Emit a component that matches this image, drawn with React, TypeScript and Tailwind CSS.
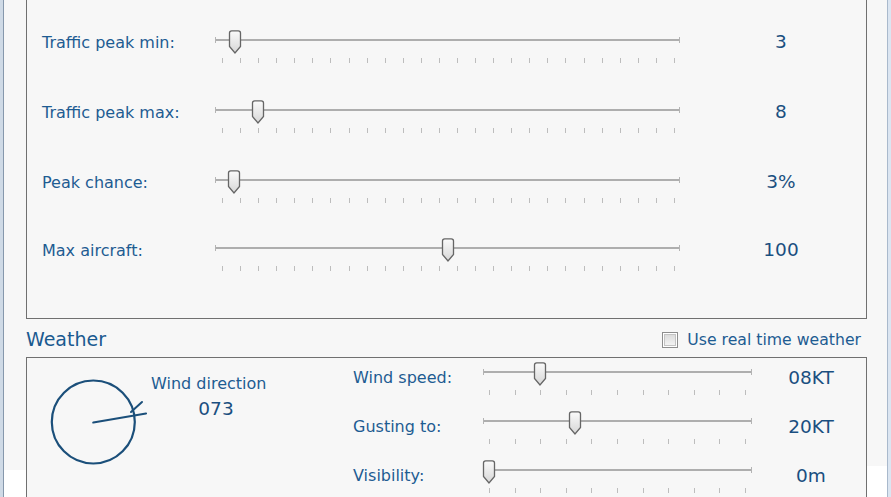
import React from "react";

const font = { fontFamily: '"DejaVu Sans", "Liberation Sans", sans-serif' };

function Thumb() {
  return (
    <svg width="14" height="24" viewBox="0 0 14 24" className="block">
      <defs>
        <linearGradient id="tg" x1="0" y1="0" x2="0" y2="1">
          <stop offset="0" stopColor="#fbfbfb" />
          <stop offset="1" stopColor="#d6d6d6" />
        </linearGradient>
      </defs>
      <path
        d="M1.5 3 Q1.5 0.8 3.7 0.8 H10.3 Q12.5 0.8 12.5 3 V16.5 L7 23 L1.5 16.5 Z"
        fill="url(#tg)"
        stroke="#666666"
        strokeWidth="1.3"
      />
    </svg>
  );
}

function Slider({
  width,
  thumb,
  ticks,
  padL,
  padR,
}: {
  width: number;
  thumb: number;
  ticks: number;
  padL: number;
  padR: number;
}) {
  return (
    <div className="relative h-[36px] shrink-0" style={{ width }}>
      <div className="absolute left-0 right-0 top-[10px] h-[2px] bg-[#aeaeae]" />
      <div className="absolute left-0 top-[8px] h-[6px] w-px bg-[#b4b4b4]" />
      <div className="absolute right-0 top-[8px] h-[6px] w-px bg-[#b4b4b4]" />
      <div
        className="absolute top-[29px] flex justify-between"
        style={{ left: padL, right: padR }}
      >
        {Array.from({ length: ticks }).map((_, i) => (
          <div key={i} className="h-[5px] w-px bg-[#bdbdbd]" />
        ))}
      </div>
      <div className="absolute top-[1px]" style={{ left: thumb - 7 }}>
        <Thumb />
      </div>
    </div>
  );
}

const topRows = [
  { label: "Traffic peak min:", value: "3", thumb: 20, h: 70 },
  { label: "Traffic peak max:", value: "8", thumb: 43, h: 70 },
  { label: "Peak chance:", value: "3%", thumb: 19, h: 68 },
  { label: "Max aircraft:", value: "100", thumb: 233, h: 70 },
];

const weatherRows = [
  { label: "Wind speed:", value: "08KT", thumb: 57 },
  { label: "Gusting to:", value: "20KT", thumb: 92 },
  { label: "Visibility:", value: "0m", thumb: 6 },
];

export default function App() {
  return (
    <div
      className="flex h-[497px] w-[891px] overflow-hidden bg-[#f7f7f7] text-[#1e5c92]"
      style={font}
    >
      {/* left window frame */}
      <div className="flex w-[4px] shrink-0">
        <div className="w-[3px] bg-[#cfdae6]" />
        <div className="w-px bg-[#8698ac]" />
      </div>
      <div className="flex w-[22px] shrink-0 flex-col">
        <div className="flex-1" />
        <div className="h-[27px] bg-white" />
      </div>

      {/* main */}
      <div className="flex w-[841px] shrink-0 flex-col">
        {/* top box */}
        <div className="mt-[-12px] h-[331px] shrink-0 border border-[#707070] pl-[15px] pt-[40px]">
          {topRows.map((r) => (
            <div key={r.label} className="flex items-start" style={{ height: r.h }}>
              <div className="mt-[4px] w-[173px] shrink-0 text-[16px] leading-[20px]">
                {r.label}
              </div>
              <Slider width={465} thumb={r.thumb} ticks={26} padL={7} padR={5} />
              <div className="ml-[20px] mt-[1px] w-[162px] shrink-0 text-center text-[18.5px] leading-[24px] text-[#1a4f80]">
                {r.value}
              </div>
            </div>
          ))}
        </div>

        {/* weather header */}
        <div className="flex h-[38px] shrink-0 items-center justify-between pr-[6px]">
          <div className="mt-[1px] text-[19px] leading-[24px] text-[#1a5a90]">Weather</div>
          <div className="mt-[3px] flex items-center">
            <div className="flex h-[16px] w-[16px] items-center justify-center border border-[#8e8e8e] bg-white">
              <div className="h-[12px] w-[12px] border border-[#c4c4c4] bg-gradient-to-b from-[#dcdcdc] to-[#f3f3f3]" />
            </div>
            <div className="ml-[9px] text-[15.7px] leading-[20px]">Use real time weather</div>
          </div>
        </div>

        {/* weather box */}
        <div className="flex h-[160px] shrink-0 border border-[#707070]">
          <div className="ml-[21px] mt-[19px] shrink-0">
            <svg width="100" height="92" viewBox="0 0 100 92" className="block">
              <circle cx="45.3" cy="45" r="41.5" fill="none" stroke="#1b4f7a" strokeWidth="2.2" />
              <line x1="45.3" y1="45.5" x2="98" y2="36.5" stroke="#1b4f7a" strokeWidth="2.2" strokeLinecap="round" />
              <line x1="94" y1="25" x2="83" y2="35" stroke="#1b4f7a" strokeWidth="2" strokeLinecap="round" />
            </svg>
          </div>
          <div className="ml-[3px] mt-[16px] flex w-[120px] shrink-0 flex-col">
            <div className="whitespace-nowrap text-[16px] leading-[20px]">Wind direction</div>
            <div className="mt-[3px] pl-[10px] text-center text-[18.5px] leading-[24px] text-[#1a4f80]">
              073
            </div>
          </div>
          <div className="ml-[82px] flex flex-col pt-[3px]">
            {weatherRows.map((r) => (
              <div key={r.label} className="flex h-[49px] items-start">
                <div className="mt-[7px] w-[130px] shrink-0 text-[16px] leading-[20px]">
                  {r.label}
                </div>
                <Slider width={269} thumb={r.thumb} ticks={11} padL={6} padR={6} />
                <div className="ml-[19px] mt-[5px] w-[80px] shrink-0 text-center text-[18.5px] leading-[24px] text-[#1a4f80]">
                  {r.value}
                </div>
              </div>
            ))}
          </div>
        </div>
      </div>

      {/* right gutter & frame */}
      <div className="flex w-[20px] shrink-0 flex-col">
        <div className="flex-1" />
        <div className="h-[31px] bg-white" />
      </div>
      <div className="flex w-[4px] shrink-0">
        <div className="w-px bg-[#a9b9cc]" />
        <div className="w-[3px] bg-[#dbe5f1]" />
      </div>
    </div>
  );
}
